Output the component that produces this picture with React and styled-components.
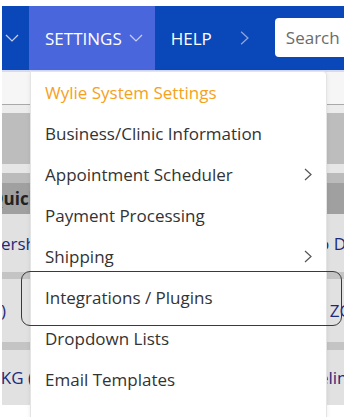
import React from 'react';
import styled, { createGlobalStyle } from 'styled-components';

const GlobalStyle = createGlobalStyle`
  body {
    margin: 0;
    background: #fff;
    font-family: "Open Sans", "Noto Sans", sans-serif;
  }
`;

const Root = styled.div`
  position: relative;
  width: 342px;
  margin-left: 2px;
  padding-top: 6px;
  height: 411px;
  overflow: hidden;
`;

const NavBar = styled.div`
  display: flex;
  align-items: stretch;
  height: 64px;
  background: #0a47b8;
  color: #fff;
`;

const NavItem = styled.div`
  display: flex;
  align-items: center;
  gap: 7px;
  padding: ${p => p.pad || '0 12px 0 16px'};
  background: ${p => (p.active ? '#4a66dc' : 'transparent')};
  font-size: 17px;
`;

const SearchBox = styled.div`
  display: flex;
  align-items: center;
  margin: 12px 0 0 0;
  height: 39px;
  flex: 1;
  background: #fff;
  border-radius: 4px 0 0 4px;
  padding-left: 11px;
  color: #6b6b6b;
  font-size: 17px;
`;

const Underline = styled.div`
  height: 2px;
  background: #d6dbf3;
`;

const Row = styled.div`
  display: flex;
  justify-content: space-between;
  align-items: center;
  height: ${p => p.h}px;
  background: ${p => p.bg};
  border-bottom: ${p => (p.line ? '1px solid #a9a9a9' : 'none')};
  font-size: 17px;
  color: ${p => (p.bold ? '#222' : '#1d2a7a')};
  font-weight: ${p => (p.bold ? 700 : 400)};
  white-space: nowrap;
  overflow: hidden;
`;

const Cell = styled.span`
  margin-left: ${p => p.ml || 0}px;
  margin-right: ${p => p.mr || 0}px;
`;

const Menu = styled.div`
  position: absolute;
  left: 28px;
  top: 71px;
  width: 295px;
  height: 346px;
  background: #fff;
  border: 1px solid #e4e4e4;
  border-radius: 0 4px 0 0;
  box-shadow: 0 1px 4px rgba(0, 0, 0, 0.08);
`;

const MenuItem = styled.div`
  display: flex;
  align-items: center;
  justify-content: space-between;
  height: 41px;
  padding: 0 14px 0 14px;
  font-size: 17px;
  color: ${p => (p.accent ? '#f5a11c' : '#333')};
`;

const Marker = styled.div`
  position: absolute;
  left: 19px;
  top: 271px;
  width: 319px;
  height: 53px;
  border: 1px solid #3a3a3a;
  border-radius: 9px;
  pointer-events: none;
`;

const ChevronDown = ({ color = '#c9d0f2' }) => (
  <svg width="14" height="8" viewBox="0 0 14 8">
    <polyline points="1,1 7,7 13,1" fill="none" stroke={color} strokeWidth="1.2" />
  </svg>
);

const ChevronRight = ({ color = '#555', w = 8, h = 13 }) => (
  <svg width={w} height={h} viewBox="0 0 8 13">
    <polyline points="1,1 7,6.5 1,12" fill="none" stroke={color} strokeWidth="1.2" />
  </svg>
);

const rows = [
  { h: 32, bg: '#f6f6f6', line: true },
  { h: 8, bg: '#ececec' },
  { h: 51, bg: '#bdbdbd' },
  { h: 9, bg: '#e6e6e6' },
  { h: 10, bg: '#bbbbbb' },
  { h: 31, bg: '#a0a0a0', bold: true, left: 'Quick', ml: -12 },
  { h: 58, bg: '#e1e1e1', left: 'Membership', ml: -52, right: 'o Due', mr: -22 },
  { h: 7, bg: '#c4c4c4' },
  { h: 63, bg: '#e1e1e1', left: ')', ml: -1, right: 'ZOO', mr: -22 },
  { h: 8, bg: '#c4c4c4' },
  { h: 55, bg: '#e1e1e1', left: 'XKG (', ml: -11, right: 'eline', mr: -13 },
];

const items = [
  { label: 'Wylie System Settings', accent: true },
  { label: 'Business/Clinic Information' },
  { label: 'Appointment Scheduler', sub: true },
  { label: 'Payment Processing' },
  { label: 'Shipping', sub: true },
  { label: 'Integrations / Plugins' },
  { label: 'Dropdown Lists' },
  { label: 'Email Templates' },
];

function App() {
  return (
    <Root>
      <GlobalStyle />
      <NavBar>
        <NavItem pad="0 10px 0 3px">
          <ChevronDown />
        </NavItem>
        <NavItem active pad="0 12px 0 16px">
          SETTINGS
          <ChevronDown />
        </NavItem>
        <NavItem pad="0 16px 0 16px">HELP</NavItem>
        <NavItem pad="0 26px 0 12px">
          <ChevronRight color="#8ea3d8" w={9} h={18} />
        </NavItem>
        <SearchBox>Search</SearchBox>
      </NavBar>
      <Underline />
      {rows.map((r, i) => (
        <Row key={i} h={r.h} bg={r.bg} line={r.line} bold={r.bold}>
          <Cell ml={r.ml}>{r.left}</Cell>
          <Cell mr={r.mr}>{r.right}</Cell>
        </Row>
      ))}
      <Menu>
        {items.map(it => (
          <MenuItem key={it.label} accent={it.accent}>
            {it.label}
            {it.sub && <ChevronRight />}
          </MenuItem>
        ))}
      </Menu>
      <Marker />
    </Root>
  );
}

export default App;
